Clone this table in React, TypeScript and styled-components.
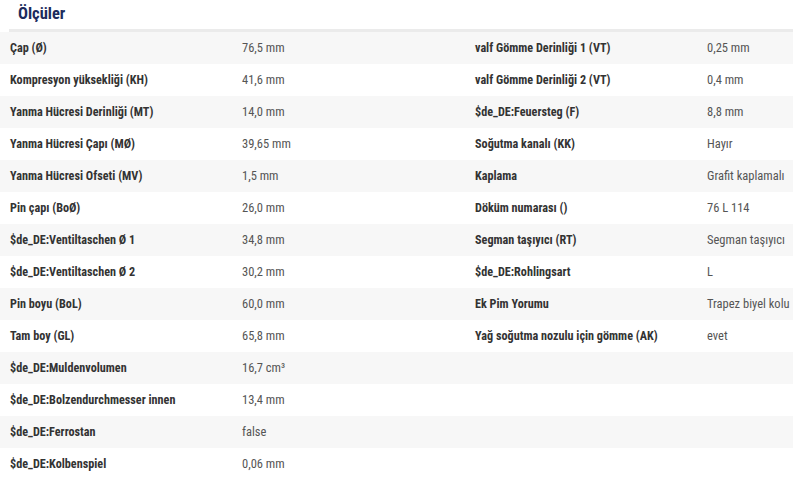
import React from 'react';
import styled, { createGlobalStyle } from 'styled-components';

const GlobalStyle = createGlobalStyle`
  html, body {
    margin: 0;
    padding: 0;
    background: #fff;
  }
  body {
    font-family: 'Roboto Condensed', 'Liberation Sans Narrow', 'Roboto', sans-serif;
    overflow: hidden;
  }
`;

type Pair = [string, string];

const leftRows: Pair[] = [
  ['Çap (Ø)', '76,5 mm'],
  ['Kompresyon yüksekliği (KH)', '41,6 mm'],
  ['Yanma Hücresi Derinliği (MT)', '14,0 mm'],
  ['Yanma Hücresi Çapı (MØ)', '39,65 mm'],
  ['Yanma Hücresi Ofseti (MV)', '1,5 mm'],
  ['Pin çapı (BoØ)', '26,0 mm'],
  ['$de_DE:Ventiltaschen Ø 1', '34,8 mm'],
  ['$de_DE:Ventiltaschen Ø 2', '30,2 mm'],
  ['Pin boyu (BoL)', '60,0 mm'],
  ['Tam boy (GL)', '65,8 mm'],
  ['$de_DE:Muldenvolumen', '16,7 cm³'],
  ['$de_DE:Bolzendurchmesser innen', '13,4 mm'],
  ['$de_DE:Ferrostan', 'false'],
  ['$de_DE:Kolbenspiel', '0,06 mm'],
];

const rightRows: Pair[] = [
  ['valf Gömme Derinliği 1 (VT)', '0,25 mm'],
  ['valf Gömme Derinliği 2 (VT)', '0,4 mm'],
  ['$de_DE:Feuersteg (F)', '8,8 mm'],
  ['Soğutma kanalı (KK)', 'Hayır'],
  ['Kaplama', 'Grafit kaplamalı'],
  ['Döküm numarası ()', '76 L 114'],
  ['Segman taşıyıcı (RT)', 'Segman taşıyıcı'],
  ['$de_DE:Rohlingsart', 'L'],
  ['Ek Pim Yorumu', 'Trapez biyel kolu'],
  ['Yağ soğutma nozulu için gömme (AK)', 'evet'],
];

const Section = styled.section`
  width: 793px;
  overflow: hidden;
`;

const Title = styled.h2`
  margin: 0 0 0 9px;
  padding: 3px 0 4px 9px;
  font-size: 16.5px;
  line-height: 22px;
  font-weight: 700;
  color: #1c2b5c;
  border-bottom: 3px solid #ebebeb;
`;

const Table = styled.div`
  width: 930px;
`;

const Row = styled.div<{ $striped: boolean }>`
  display: grid;
  grid-template-columns: 232px 233px 232px 233px;
  height: 32px;
  align-items: center;
  background: ${(p) => (p.$striped ? '#f7f7f7' : '#fff')};
`;

const Cell = styled.div<{ $label?: boolean }>`
  padding-left: 10px;
  white-space: nowrap;
  line-height: 16px;
  font-size: ${(p) => (p.$label ? '12.2px' : '12.5px')};
  font-weight: ${(p) => (p.$label ? 700 : 400)};
  color: ${(p) => (p.$label ? '#333' : '#555')};
`;

export default function App() {
  return (
    <>
      <GlobalStyle />
      <Section>
        <Title>Ölçüler</Title>
        <Table>
          {leftRows.map(([label, value], i) => {
            const right = rightRows[i];
            return (
              <Row key={label} $striped={i % 2 === 0}>
                <Cell $label>{label}</Cell>
                <Cell>{value}</Cell>
                <Cell $label>{right ? right[0] : ''}</Cell>
                <Cell>{right ? right[1] : ''}</Cell>
              </Row>
            );
          })}
        </Table>
      </Section>
    </>
  );
}
